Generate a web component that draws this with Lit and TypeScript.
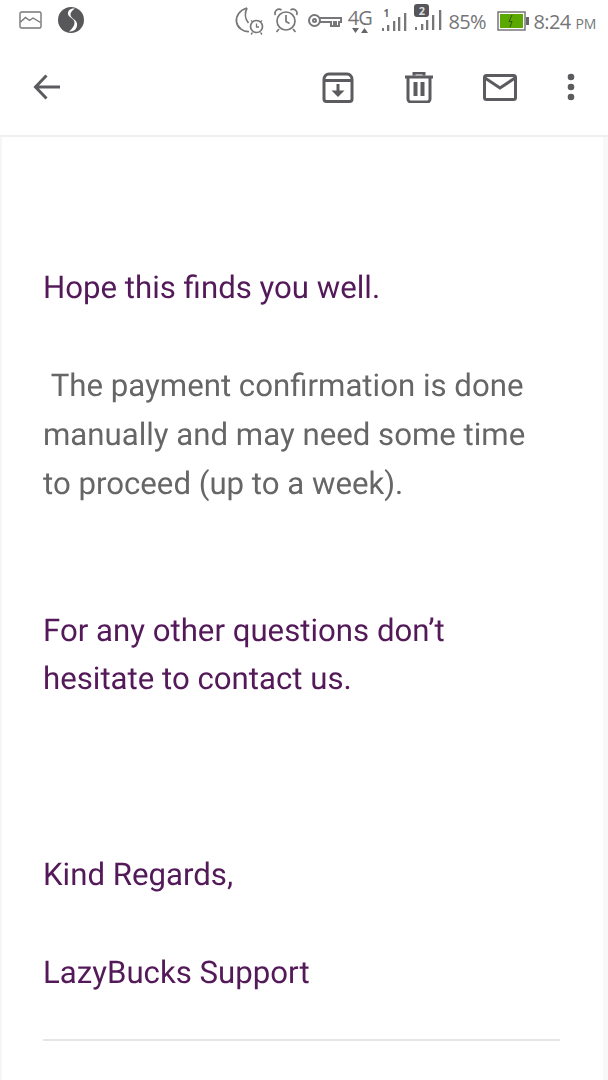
import { LitElement, html, css } from "lit";
import { customElement } from "lit/decorators.js";

const G = "#77777a";
const D = "#5c5c60";

@customElement("app-root")
export class AppRoot extends LitElement {
  static styles = css`
    :host { display: block; width: 608px; height: 1080px; overflow: hidden; background: #fff; font-family: Roboto, sans-serif; }
    .header { height: 135px; background: #fff; border-bottom: 2px solid #f0f0f0; display: flex; flex-direction: column; }
    .status { height: 40px; display: flex; align-items: flex-start; color: #757578; }
    svg { display: block; flex: none; }
    .s-left { display: flex; gap: 16px; padding: 7px 0 0 19px; align-items: center; height: 26px; }
    .spacer { flex: 1; }
    .s-right { display: flex; align-items: flex-start; padding: 4px 12px 0 0; }
    .moon { margin-top: 3px; }
    .alarm { margin: 4px 0 0 10px; }
    .key { margin: 10px 0 0 10px; }
    .net { margin: 4px 0 0 5px; width: 25px; display: flex; flex-direction: column; align-items: center; }
    .net span { font-family: "Open Sans", sans-serif; font-size: 20px; line-height: 20px; letter-spacing: -0.8px; white-space: nowrap; }
    .sig { position: relative; }
    .sig1 { margin: 4px 0 0 10px; width: 25px; height: 24px; }
    .sig2 { margin: 0 0 0 7px; width: 28px; height: 27px; }
    .num { position: absolute; font-family: "Open Sans", sans-serif; font-weight: 700; line-height: 1; }
    .sig1 .num { left: 1px; top: 0; font-size: 10px; color: #66666a; }
    .sig2 .num { left: 0; top: 0; width: 15px; height: 13px; line-height: 13px; text-align: center; font-size: 11px; background: #55555a; border-radius: 3px; color: #ddd; }
    .pct { font-family: "Open Sans", sans-serif; font-size: 20px; line-height: 26px; margin: 5px 0 0 6px; width: 49px; letter-spacing: -0.7px; white-space: nowrap; }
    .batt { margin-top: 7px; }
    .time { font-family: "Open Sans", sans-serif; font-size: 20px; line-height: 26px; margin: 5px 0 0 4px; letter-spacing: -0.6px; white-space: nowrap; }
    .time small { font-size: 14px; margin-left: 5px; letter-spacing: -0.3px; }
    .toolbar { height: 95px; display: flex; align-items: flex-start; padding: 34px 0 0 33px; box-sizing: border-box; }
    .tools { display: flex; align-items: flex-start; margin-left: auto; padding-right: 33px; }
    .archive { margin-top: -2px; }
    .trash { margin: -2px 0 0 51px; }
    .mail { margin-left: 50px; }
    .more { margin: -1px 0 0 50px; }
    .body { height: 943px; box-sizing: border-box; padding: 127px 43px 0 41px;
      border-left: 3px solid #f6f6f6; border-right: 5px solid #f8f8f8;
      font-size: 31.2px; line-height: 48.93px; color: #666; margin-left: -1px; text-rendering: geometricPrecision; }
    p { margin: 0; white-space: nowrap; will-change: transform; }
    .accent { color: #531958; }
    .gap { height: 48.93px; }
    .gap2 { height: 97.86px; }
    .gap3 { height: 146.8px; }
    hr { border: 0; height: 2px; background: #e6e6e6; margin: 41px 0 0 0; }
  `;

  render() {
    return html`
      <div class="header">
        <div class="status">
          <div class="s-left">
            <svg width="23" height="18" viewBox="0 0 23 18" fill="none" stroke="${G}" stroke-width="1.4"><rect x="1" y="1" width="21" height="16" rx="1.5"/><path d="M1.5 11l5-4.5 4 3 3.500-2.500 7.500 4.500"/></svg>
            <svg width="26" height="26" viewBox="0 0 26 26"><circle cx="13" cy="13" r="13" fill="#58585b"/><path d="M17 1.500c-4.500-.6-7.500 2-7 5.500.5 3.300 6 4.500 6.500 8 .4 3.300-2 6.500-5.500 9.500 6 .6 8.500-4 8-8-.5-3.800-6-5-6.500-8.500-.3-2.300 1.500-4.500 4.500-6.500z" fill="#fff"/></svg>
          </div>
          <div class="spacer"></div>
          <div class="s-right">
            <svg class="moon" width="30" height="28" viewBox="0 0 30 28" fill="none" stroke="${G}" stroke-width="1.700"><path d="M13 1C6 3 1.500 9 2.500 15c1 6 7 10 12.500 9.500"/><path d="M13 1c-2.500 5-2 11 1.500 15"/><circle cx="22.500" cy="19.500" r="6"/><path d="M22.500 16.500v3.500h2.500M17 13.500l2 1.500M28 13.500l-2 1.500M18.500 25.500l-1.500 2M26.500 25.500l1.500 2" stroke-width="1.300"/></svg>
            <svg class="alarm" width="24" height="25" viewBox="0 0 24 25" fill="none" stroke="${G}" stroke-width="1.700"><circle cx="12" cy="13" r="9"/><path d="M12 7v6.500l3.500 2M5 21l-2.500 3M19 21l2.500 3"/><path d="M1.500 7a4 4 0 0 1 6-5M22.500 7a4 4 0 0 0-6-5"/></svg>
            <svg class="key" width="34" height="13" viewBox="0 0 34 13" fill="none" stroke="${G}" stroke-width="2"><circle cx="6.500" cy="6.500" r="5.500"/><circle cx="6.500" cy="6.500" r="1.500"/><path d="M12 4h21v4h-2v4h-3V8h-2v4h-3V8H12"/></svg>
            <div class="net">
              <span>4G</span>
              <svg width="16" height="5" viewBox="0 0 16 5"><path d="M0 0h7L3.500 5zM9 5h7L12.500 0z" fill="#66666a"/></svg>
            </div>
            <div class="sig sig1">
              <svg width="25" height="24" viewBox="0 0 25 24" fill="${G}"><rect x="0" y="20" width="2" height="3"/><rect x="5" y="17" width="2.300" height="6"/><rect x="11" y="13" width="2.300" height="10"/><rect x="16" y="9" width="2.300" height="14"/><rect x="22" y="5" width="2.300" height="18"/></svg>
              <span class="num">1</span>
            </div>
            <div class="sig sig2">
              <svg width="28" height="27" viewBox="0 0 28 27" fill="${G}"><rect x="1" y="23" width="2" height="3"/><rect x="7" y="20" width="2.300" height="6"/><rect x="12" y="16" width="2.300" height="10"/><rect x="18" y="11" width="2.300" height="15"/><rect x="25" y="6" width="2.300" height="20"/></svg>
              <span class="num">2</span>
            </div>
            <div class="pct">85%</div>
            <svg class="batt" width="32" height="20" viewBox="0 0 32 20"><rect x="1" y="1" width="27" height="18" fill="#fff" stroke="${G}" stroke-width="1.500"/><rect x="3" y="3" width="23" height="14" fill="#5aa800"/><rect x="29" y="6" width="3" height="8" fill="#66666a"/><path d="M15 4l-3 6.500h3l-2 5.500" fill="none" stroke="#2f5a00" stroke-width="1"/></svg>
            <div class="time">8:24<small>PM</small></div>
          </div>
        </div>
        <div class="toolbar">
          <svg width="27" height="26" viewBox="0 0 27 26" fill="none" stroke="${D}" stroke-width="3"><path d="M27 13H3M13.500 1.500L2.500 13l11 11.500"/></svg>
          <div class="tools">
            <svg class="archive" width="32" height="31" viewBox="0 0 32 31" fill="none" stroke="${D}" stroke-width="3"><path d="M2 7.500a5 5 0 0 1 5-5.500h18a5 5 0 0 1 5 5.500V27a2.500 2.500 0 0 1-2.500 2.500h-23A2.500 2.500 0 0 1 2 27z"/><path d="M2 8.500h28"/><path d="M16 12v9"/><path d="M9.500 18.500H22.500L16 25z" fill="${D}" stroke="none"/></svg>
            <svg class="trash" width="28" height="31" viewBox="0 0 28 31" fill="none" stroke="${D}" stroke-width="3"><path d="M0 5h28"/><path d="M9 3.500V1h10v2.500"/><path d="M3 5v22a3 3 0 0 0 3 3h16a3 3 0 0 0 3-3V5"/><path d="M10.500 10v14M17.500 10v14" stroke-width="4"/></svg>
            <svg class="mail" width="34" height="27" viewBox="0 0 34 27" fill="none" stroke="${D}" stroke-width="3"><rect x="1.500" y="1.500" width="31" height="24" rx="2"/><path d="M2 4l15 10L32 4"/></svg>
            <svg class="more" width="8" height="28" viewBox="0 0 8 28" fill="${D}"><circle cx="4" cy="4" r="3.300"/><circle cx="4" cy="14" r="3.300"/><circle cx="4" cy="24" r="3.300"/></svg>
          </div>
        </div>
      </div>
      <div class="body">
        <p class="accent">Hope this finds you well.</p>
        <div class="gap"></div>
        <p>&nbsp;The payment confirmation is done</p>
        <p>manually and may need some time</p>
        <p>to proceed (up to a week).</p>
        <div class="gap2"></div>
        <p class="accent">For any other questions don’t</p>
        <p class="accent">hesitate to contact us.</p>
        <div class="gap3"></div>
        <p class="accent">Kind Regards,</p>
        <div class="gap"></div>
        <p class="accent">LazyBucks Support</p>
        <hr />
      </div>
    `;
  }
}
